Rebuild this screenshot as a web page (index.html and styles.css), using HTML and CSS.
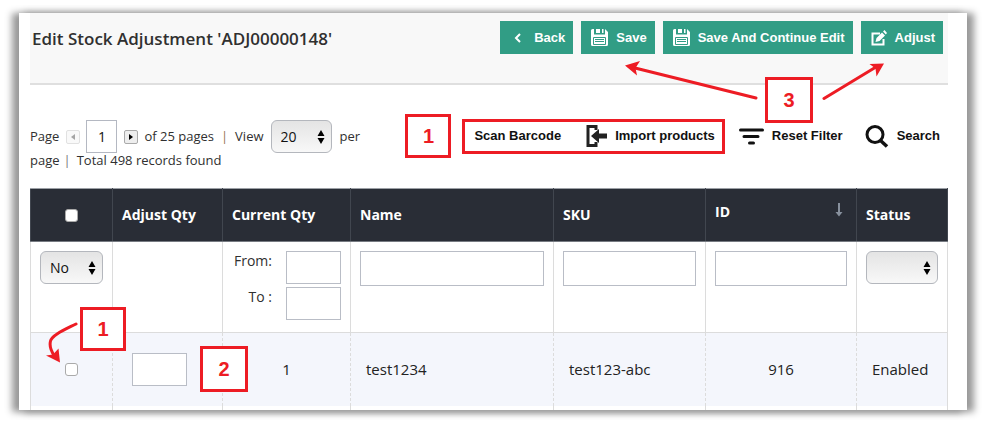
FILE: index.html
```html
<!DOCTYPE html>
<html lang="en">
<head>
<meta charset="utf-8">
<title>Edit Stock Adjustment</title>
<link rel="stylesheet" href="styles.css">
</head>
<body>
<svg class="sprite" aria-hidden="true">
  <symbol id="floppy" viewBox="0 0 17 17">
    <path fill="#fff" d="M0 1.500Q0 0 1.500 0H3V5.500H14V0L17 3V15.500Q17 17 15.500 17H1.500Q0 17 0 15.500Z"/>
    <path fill="#fff" d="M5 0h4v4H5zM11 0h1.500v4H11z"/>
    <path fill="none" stroke="#319d85" d="M2.500 8.500h12v7h-12zM4 10.500h9M4 12.500h9"/>
  </symbol>
</svg>
<main class="card">
  <header class="head">
    <h1 class="title">Edit Stock Adjustment 'ADJ00000148'</h1>
    <div class="buttons">
      <button class="btn btn-back" type="button"><svg class="chev" viewBox="0 0 8 10"><path d="M6 1 2 5l4 4" fill="none" stroke="#fff" stroke-width="2"/></svg>Back</button>
      <button class="btn" type="button"><svg class="disk"><use href="#floppy"/></svg>Save</button>
      <button class="btn" type="button"><svg class="disk"><use href="#floppy"/></svg>Save And Continue Edit</button>
      <button class="btn" type="button"><svg class="edit" viewBox="0 0 16 16"><path d="M9 3.500H1.500v11h11V9" fill="none" stroke="#fff" stroke-width="2"/><path fill="#fff" d="M4.500 12 5.500 8 11 2.500l3 3L8.500 11zM12 1.500 13.500 0 16 3l-1.200 1.500z"/></svg>Adjust</button>
    </div>
  </header>

  <section class="toolbar">
    <div class="pager">
      <div class="line">
        <label for="page">Page</label>
        <button class="step step-off" type="button" aria-label="Previous page" disabled><svg viewBox="0 0 4 6"><path d="M4 0v6L0 3z"/></svg></button>
        <input class="page-no" id="page" type="text" value="1">
        <button class="step" type="button" aria-label="Next page"><svg viewBox="0 0 4 6"><path d="M0 0v6l4-3z"/></svg></button>
        <span>of 25 pages</span><span class="bar">|</span><label for="limit">View</label>
        <span class="pick pick-limit"><select id="limit"><option>20</option></select><svg viewBox="0 0 8 14"><path d="M4 0l3.500 6h-7zM4 14l3.500-6h-7z"/></svg></span>
        <span>per</span>
      </div>
      <div class="line">
        <span>page</span><span class="bar2">|</span><span>Total 498 records found</span>
      </div>
    </div>
    <div class="tools">
      <span class="badge">1</span>
      <div class="marked">
        <button class="tool" type="button">Scan Barcode</button>
        <button class="tool" type="button"><svg class="import" viewBox="0 0 21 22"><path d="M10 5V1.500H2v19h8V17" fill="none" stroke="#222" stroke-width="3"/><path fill="#222" d="M5 11l8-7v4.500h8v5h-8V18z"/></svg>Import products</button>
      </div>
      <button class="tool tool-filter" type="button"><svg class="filter" viewBox="0 0 25 17"><path d="M1.500 2h22M5 8.500h14M10.500 15h4" stroke="#111" stroke-width="3" stroke-linecap="round"/></svg>Reset Filter</button>
      <button class="tool" type="button"><svg class="lens" viewBox="0 0 24 24"><circle cx="10" cy="10.500" r="8" fill="none" stroke="#111" stroke-width="3"/><path d="M15.500 16.500l6.500 6" stroke="#111" stroke-width="3.500"/></svg>Search</button>
    </div>
  </section>

  <table class="grid">
    <colgroup><col class="c-check"><col class="c-adjust"><col class="c-current"><col><col class="c-sku"><col class="c-id"><col class="c-status"></colgroup>
    <thead>
      <tr>
        <th class="mid"><input class="tick" type="checkbox" aria-label="Select all"></th>
        <th>Adjust Qty</th><th>Current Qty</th><th>Name</th><th>SKU</th>
        <th><div class="sorted">ID<svg viewBox="0 0 8 14"><path d="M3 0h2v9h2.500L4 13.500.5 9H3z" fill="#87909d"/></svg></div></th>
        <th>Status</th>
      </tr>
    </thead>
    <tbody>
      <tr class="filters">
        <td><span class="pick"><select aria-label="Selected"><option>No</option></select><svg viewBox="0 0 8 14"><path d="M4 0l3.500 6h-7zM4 14l3.500-6h-7z"/></svg></span></td>
        <td></td>
        <td>
          <div class="range">
            <label for="from">From:</label><input id="from" class="box" type="text">
            <label for="to">To :</label><input id="to" class="box" type="text">
          </div>
        </td>
        <td><input class="box tall" type="text" aria-label="Name"></td>
        <td><input class="box tall" type="text" aria-label="SKU"></td>
        <td><input class="box tall" type="text" aria-label="ID"></td>
        <td><span class="pick"><select aria-label="Status"><option></option></select><svg viewBox="0 0 8 14"><path d="M4 0l3.500 6h-7zM4 14l3.500-6h-7z"/></svg></span></td>
      </tr>
      <tr class="item">
        <td class="mid"><input class="tick" type="checkbox" aria-label="Select test1234"></td>
        <td><input class="box qty" type="text" aria-label="Adjust quantity"></td>
        <td class="mid">1</td><td>test1234</td><td>test123-abc</td><td class="mid">916</td><td>Enabled</td>
      </tr>
      <tr class="rest"><td></td><td></td><td></td><td></td><td></td><td></td><td></td></tr>
    </tbody>
  </table>

  <span class="badge badge-row">1</span>
  <span class="badge badge-qty">2</span>
  <span class="badge badge-save">3</span>
  <svg class="arrow-row" viewBox="0 0 32 42" aria-hidden="true"><path d="M30 3C18 9 6 14 4.500 20 3 26 5 30 8.500 35" fill="none" stroke="#ed1c24" stroke-width="3" stroke-linecap="round"/><path d="M14 41.500 0 34.500l7-1 5.500-6z" fill="#ed1c24"/></svg>
  <svg class="arrows-save" viewBox="0 0 262 40" aria-hidden="true"><path d="M131 37 10 7M199 37.500 251 6" fill="none" stroke="#ed1c24" stroke-width="3" stroke-linecap="round"/><path d="M0 4.500 15 0l-4.500 7L12 14.500zM259 2.500l-14.500.5 6 4.500 1 8z" fill="#ed1c24"/></svg>
</main>
</body>
</html>
```
FILE: styles.css
```css
* { box-sizing: border-box; }
body {
  margin: 0;
  padding: 13px 20px 14px 19px;
  background: #fff;
  color: #303030;
  font: 13px/18px "Open Sans", "Noto Sans", sans-serif;
}
button, input, select { font: inherit; color: inherit; margin: 0; }
button { border: 0; padding: 0; background: none; }
.sprite { position: absolute; width: 0; height: 0; }
.card {
  position: relative;
  padding: 0 19px 0 11px;
  background: #fff;
  box-shadow: 6px 1px 7px 1px #999, -6px 1px 7px 1px #999;
}
.head {
  display: flex;
  justify-content: space-between;
  align-items: flex-start;
  height: 72px;
  padding: 8px 5px 0 2px;
  background: #f8f8f8;
  border-bottom: 2px solid #dfdfdf;
}
.title { margin: 6px 0 0; font-size: 17px; line-height: 24px; font-weight: 600; }
.buttons { display: flex; gap: 8px; }
.btn {
  display: flex;
  align-items: center;
  gap: 8px;
  height: 33px;
  padding: 0 8px 0 10px;
  background: #319d85;
  color: #fff;
  font: bold 13px/18px "Liberation Sans", sans-serif;
}
.btn-back { padding-left: 14px; gap: 12px; }
.chev { width: 8px; height: 10px; }
.disk { width: 17px; height: 17px; }
.edit { width: 16px; height: 16px; }

.toolbar { display: flex; justify-content: space-between; align-items: flex-start; padding: 29px 8px 0 0; height: 103px; }
.pager { padding-top: 6px; }
.line { display: flex; align-items: center; white-space: nowrap; }
.line label, .line > span:not(.pick) { margin-top: -2px; }
.line .step {
  width: 14px; height: 14px; margin: 0 6px 0 7px;
  border: 1px solid #aaa; border-radius: 2px; background: #eee;
  display: flex; align-items: center; justify-content: center;
}
.step svg { width: 4px; height: 6px; }
.step-off { opacity: .35; }
.page-no { width: 31px; height: 33px; padding: 0; text-align: center; border: 1px solid #b4b8c2; color: #111; font-size: 14px; }
.bar { margin: 0 7px; color: #97724e; }
.bar2 { margin: 0 6px 0 4px; color: #777; }
.pick { position: relative; display: block; }
.pick select {
  appearance: none;
  width: 100%; height: 33px; padding: 0 9px;
  border: 1px solid #b4b7bd; border-radius: 6px;
  background: linear-gradient(#e4e4e4, #f8f8f8);
  color: #111; font-size: 14px;
}
.pick svg { position: absolute; right: 7px; top: 10px; width: 8px; height: 14px; pointer-events: none; }
.pick-limit { width: 61px; margin: 0 8px 0 7px; }

.tools { display: flex; align-items: center; }
.badge {
  display: flex; align-items: center; justify-content: center;
  width: 46px; height: 44px;
  border: 3px solid #ed1c24; background: #fff; color: #ed1c24;
  font: bold 20px/24px "Liberation Sans", sans-serif;
}
.marked { display: flex; gap: 25px; margin: 0 14px 0 11px; padding: 0 7px 0 9px; height: 35px; border: 3px solid #ed1c24; }
.tool { display: flex; align-items: center; gap: 8px; color: #111; font: bold 13px/18px "Liberation Sans", sans-serif; white-space: nowrap; }
.tool-filter { margin-right: 22px; }
.import { width: 21px; height: 22px; }
.filter { width: 25px; height: 17px; }
.lens { width: 24px; height: 24px; }

.grid { width: 100%; table-layout: fixed; border-collapse: collapse; }
.c-check { width: 82px; }
.c-adjust { width: 110px; }
.c-current { width: 128px; }
.c-sku { width: 152px; }
.c-id { width: 151px; }
.c-status { width: 91px; }
.grid th {
  height: 53px; padding: 0 9px; text-align: left;
  background: #292d36; color: #fff; font-size: 14px; font-weight: 700;
  border: 1px solid #41464f; border-top-color: #9ca0a6; border-bottom-color: #777b82;
}
.grid .mid { text-align: center; }
.sorted { display: flex; justify-content: space-between; padding-bottom: 7px; }
.sorted svg { width: 8px; height: 14px; margin-right: 4px; }
.tick { appearance: none; display: block; width: 13px; height: 13px; margin: 0 auto; border: 1px solid #aaa; border-radius: 3px; background: #fff; }
.grid td { padding: 0 9px; border: 1px solid #dcdcdc; }
.filters td { height: 91px; padding-top: 9px; vertical-align: top; }
.box { display: block; width: 100%; height: 33px; padding: 0 4px; border: 1px solid #b9bdc6; background: #fff; }
.tall { height: 35px; }
.range { display: grid; grid-template-columns: 1fr 55px; gap: 3px 14px; font-size: 14px; line-height: 20px; }
.range label { text-align: right; }
.item td { height: 73px; padding: 0 15px; background: #f4f6fc; color: #222; font-size: 15px; }
.item .qty { width: 55px; margin-left: 4px; }
.item td, .rest td { border-left-style: dashed; border-right-style: dashed; }
.item td:first-child, .rest td:first-child { border-left-style: solid; }
.item td:last-child, .rest td:last-child { border-right-style: solid; }
.item td, .rest td { border-bottom: 0; }
.rest td { height: 4px; border-top: 0; }

.badge-row, .badge-qty, .badge-save, .arrow-row, .arrows-save { position: absolute; }
.badge-row { left: 61px; top: 294px; }
.badge-qty { left: 181px; top: 333px; width: 48px; height: 46px; }
.badge-save { right: 154px; top: 64px; width: 48px; height: 46px; }
.arrow-row { left: 27px; top: 308px; width: 32px; height: 42px; }
.arrows-save { right: 80px; top: 48px; width: 262px; height: 40px; }
```
